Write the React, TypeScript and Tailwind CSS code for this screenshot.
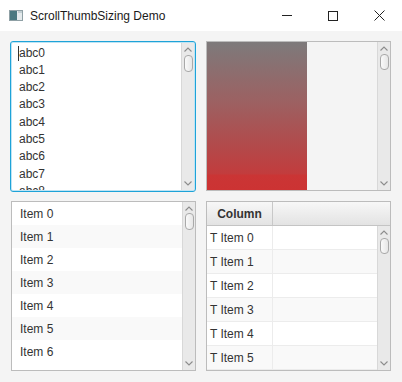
import React from "react";

function Chevron({ up }: { up?: boolean }) {
  return (
    <svg width="8" height="5" viewBox="0 0 8 5" className="block">
      <path
        d={up ? "M0.5 4.5 L4 1 L7.5 4.5" : "M0.5 0.5 L4 4 L7.5 0.5"}
        fill="none"
        stroke="#8c8c8c"
        strokeWidth="1.1"
      />
    </svg>
  );
}

function ScrollBar({ thumbTop = 1, thumbHeight = 16 }: { thumbTop?: number; thumbHeight?: number }) {
  return (
    <div className="w-[13px] shrink-0 h-full flex flex-col bg-[#e9e9e9] border-l border-[#d8d8d8]">
      <div className="h-[11px] flex items-center justify-center pt-[2px]">
        <Chevron up />
      </div>
      <div className="flex-1 relative">
        <div
          className="absolute left-[1.5px] right-[1.5px] rounded-[4px] border border-[#a9a9a9] bg-[linear-gradient(to_right,#fafafa,#e6e6e6)]"
          style={{ top: thumbTop, height: thumbHeight }}
        />
      </div>
      <div className="h-[11px] flex items-center justify-center pb-[2px]">
        <Chevron />
      </div>
    </div>
  );
}

function TitleBar() {
  return (
    <div className="h-[31px] bg-white flex items-center shrink-0">
      <svg width="14" height="11" viewBox="0 0 14 11" className="ml-[9px] mt-[-1px]">
        <rect x="0.5" y="0.5" width="13" height="10" fill="#e4eaec" stroke="#8fa0a5" />
        <rect x="1" y="1" width="7" height="9" fill="#4a7880" />
        <rect x="9" y="1" width="4" height="2" fill="#c3cfd3" />
      </svg>
      <span className="ml-[7px] text-[12px] text-[#1a1a1a]">ScrollThumbSizing Demo</span>
      <div className="ml-auto flex h-full">
        <div className="w-[46px] flex items-center justify-center">
          <div className="w-[10px] h-px bg-[#222]" />
        </div>
        <div className="w-[46px] flex items-center justify-center">
          <div className="w-[10px] h-[10px] border border-[#222]" />
        </div>
        <div className="w-[46px] flex items-center justify-center">
          <svg width="11" height="11" viewBox="0 0 11 11">
            <path d="M0.5 0.5 L10.5 10.5 M10.5 0.5 L0.5 10.5" stroke="#222" strokeWidth="1" />
          </svg>
        </div>
      </div>
    </div>
  );
}

function TextAreaBox() {
  const lines = ["abc0", "abc1", "abc2", "abc3", "abc4", "abc5", "abc6", "abc7", "abc8"];
  return (
    <div className="ml-[-1px] h-[151px] mt-[-0.5px] rounded-[3px] border border-[#1ea3d8] shadow-[inset_0_0_0_1px_#bfe4f4] bg-white flex overflow-hidden p-px">
      <div className="flex-1 overflow-hidden pt-[2px] pl-[7px] text-[12px] leading-[17.3px] text-[#333]">
        {lines.map((l, i) => (
          <div key={l} className="relative">
            {i === 0 && <span className="absolute left-[-1px] top-[1px] h-[15px] w-px bg-[#333]" />}
            {l}
          </div>
        ))}
      </div>
      <ScrollBar thumbTop={1} thumbHeight={17} />
    </div>
  );
}

function GradientBox() {
  return (
    <div className="h-[150px] border border-[#bcbcbc] bg-[#f4f4f4] flex">
      <div className="w-[100px] h-full bg-[linear-gradient(to_bottom,#7d7a7b,#9c6162_40%,#b24a4b_70%,#c23c3d_89%,#ca3535_90%,#cc3333)]" />
      <div className="flex-1" />
      <ScrollBar thumbTop={1} thumbHeight={16} />
    </div>
  );
}

function ListBox() {
  const items = ["Item 0", "Item 1", "Item 2", "Item 3", "Item 4", "Item 5", "Item 6"];
  return (
    <div className="h-[170px] border border-[#bcbcbc] bg-white flex overflow-hidden">
      <div className="flex-1 overflow-hidden text-[12px] text-[#333]">
        {items.map((t, i) => (
          <div
            key={t}
            className={`h-[23px] flex items-center pl-[8px] ${i % 2 === 1 ? "bg-[#f9f9f9]" : "bg-white"}`}
          >
            {t}
          </div>
        ))}
      </div>
      <ScrollBar thumbTop={0} thumbHeight={17} />
    </div>
  );
}

function TableBox() {
  const rows = ["T Item 0", "T Item 1", "T Item 2", "T Item 3", "T Item 4", "T Item 5"];
  return (
    <div className="h-[170px] border border-[#bcbcbc] bg-white flex flex-col overflow-hidden">
      <div className="h-[24px] shrink-0 flex border-b border-[#c4c4c4] bg-[linear-gradient(to_bottom,#f7f7f7,#e3e3e3)]">
        <div className="w-[66px] flex items-center justify-center border-r border-[#c8c8c8] text-[12px] font-bold text-[#333]">
          Column
        </div>
        <div className="flex-1" />
      </div>
      <div className="flex-1 flex overflow-hidden">
        <div className="flex-1 overflow-hidden text-[12px] text-[#333]">
          {rows.map((t, i) => (
            <div
              key={t}
              className={`h-[24px] flex border-b border-[#ececec] ${i % 2 === 1 ? "bg-[#f9f9f9]" : "bg-white"}`}
            >
              <div className="w-[66px] flex items-center pl-[3px] border-r border-[#ececec]">{t}</div>
              <div className="flex-1" />
            </div>
          ))}
        </div>
        <ScrollBar thumbTop={1} thumbHeight={16} />
      </div>
    </div>
  );
}

export default function App() {
  return (
    <div className="w-[402px] h-[382px] bg-[#f4f4f4] flex flex-col overflow-hidden font-['Liberation_Sans',Arial,sans-serif]">
      <TitleBar />
      <div className="grid grid-cols-[185px_185px] grid-rows-[150px_170px] gap-[10px] pl-[11px] pt-[10px]">
        <TextAreaBox />
        <GradientBox />
        <ListBox />
        <TableBox />
      </div>
    </div>
  );
}
